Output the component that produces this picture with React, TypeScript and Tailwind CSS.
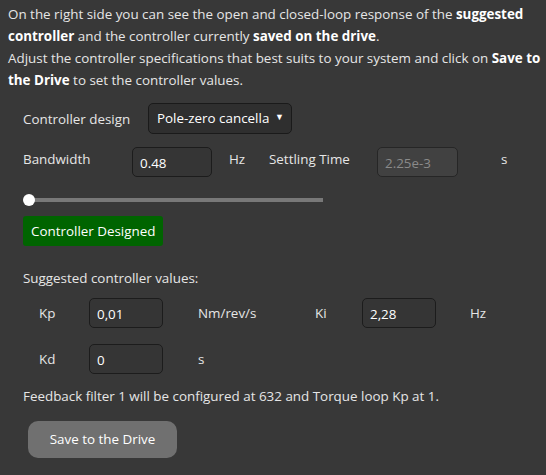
const FONT = "font-['Open_Sans',_'Noto_Sans',_sans-serif]";

function Field({ value, className = '', disabled = false }: { value: string; className?: string; disabled?: boolean }) {
  return (
    <div
      className={`flex h-[30px] items-center rounded-[5px] border px-[7px] pt-[2px] ${
        disabled ? 'border-[#262626] bg-[#414141] text-[#8a8a8a]' : 'border-[#1c1c1c] bg-[#353535] text-white'
      } ${className}`}
    >
      {value}
    </div>
  );
}

export default function App() {
  return (
    <div className={`h-[475px] w-[546px] overflow-hidden bg-[#383838] text-[13.4px] text-[#e6e6e6] ${FONT}`}>
      <p className="whitespace-nowrap px-[8px] pt-[3px] leading-[22px]">
        On the right side you can see the open and closed-loop response of the <b className="text-white">suggested</b>
        <br />
        <b className="text-white">controller</b> and the controller currently <b className="text-white">saved on the drive</b>.
        <br />
        Adjust the controller specifications that best suits to your system and click on <b className="text-white">Save to</b>
        <br />
        <b className="text-white">the Drive</b> to set the controller values.
      </p>

      <div className="mt-[12px] flex items-center pl-[23px]">
        <span className="w-[125px] pt-[2px]">Controller design</span>
        <div className="flex h-[31px] w-[144px] items-center rounded-[5px] border border-[#1a1a1a] bg-[#2f2f2f] pl-[8px] pr-[7px] text-white">
          <span className="w-[112px] overflow-hidden whitespace-nowrap">Pole-zero cancellation</span>
          <span className="ml-auto -mt-[3px] text-[9px]">▼</span>
        </div>
      </div>

      <div className="mt-[13px] flex items-center pl-[23px]">
        <span className="-mt-[6px] w-[109px]">Bandwidth</span>
        <Field value="0.48" className="w-[80px]" />
        <span className="-mt-[6px] ml-[17px] w-[40px]">Hz</span>
        <span className="-mt-[6px] w-[108px]">Settling Time</span>
        <Field value="2.25e-3" className="w-[81px]" disabled />
        <span className="-mt-[6px] ml-[43px]">s</span>
      </div>

      <div className="relative ml-[29px] mt-[21px] h-[4px] w-[294px] bg-[#787878]">
        <div className="absolute -left-[6px] -top-[4px] h-[12px] w-[12px] rounded-full bg-white" />
      </div>

      <button className="ml-[23px] mt-[14px] h-[30px] rounded-[3px] bg-[#006400] px-[8px] text-white">Controller Designed</button>

      <p className="mt-[22px] pl-[23px] leading-[20px]">Suggested controller values:</p>

      <div className="mt-[10px] flex items-center pl-[39px]">
        <span className="w-[50px]">Kp</span>
        <Field value="0,01" className="w-[74px]" />
        <span className="ml-[35px] w-[117px]">Nm/rev/s</span>
        <span className="w-[47px]">Ki</span>
        <Field value="2,28" className="w-[74px]" />
        <span className="ml-[34px]">Hz</span>
      </div>

      <div className="mt-[16px] flex items-center pl-[39px]">
        <span className="w-[50px]">Kd</span>
        <Field value="0" className="w-[74px]" />
        <span className="ml-[35px]">s</span>
      </div>

      <p className="mt-[12px] pl-[23px] leading-[20px]">Feedback filter 1 will be configured at 632 and Torque loop Kp at 1.</p>

      <button className="ml-[28px] mt-[15px] h-[37px] w-[149px] rounded-[10px] bg-[#707070] text-white">Save to the Drive</button>
    </div>
  );
}
